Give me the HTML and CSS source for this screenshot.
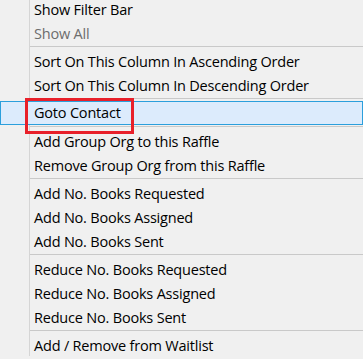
FILE: index.html
```html
<!DOCTYPE html>
<html lang="en">
<head>
    <meta charset="UTF-8">
    <title>Context Menu</title>
    <link rel="stylesheet" href="styles.css">
</head>
<body>
    <div class="menu">
        <div class="menu-item">Show Filter Bar</div>
        <div class="menu-item disabled">Show All</div>
        <div class="separator"></div>
        <div class="menu-item">Sort On This Column In Ascending Order</div>
        <div class="menu-item">Sort On This Column In Descending Order</div>
        <div class="separator"></div>
        <div class="menu-item active"><span class="callout">Goto Contact</span></div>
        <div class="separator"></div>
        <div class="menu-item">Add Group Org to this Raffle</div>
        <div class="menu-item">Remove Group Org from this Raffle</div>
        <div class="separator"></div>
        <div class="menu-item">Add No. Books Requested</div>
        <div class="menu-item">Add No. Books Assigned</div>
        <div class="menu-item">Add No. Books Sent</div>
        <div class="separator"></div>
        <div class="menu-item">Reduce No. Books Requested</div>
        <div class="menu-item">Reduce No. Books Assigned</div>
        <div class="menu-item">Reduce No. Books Sent</div>
        <div class="separator"></div>
        <div class="menu-item">Add / Remove from Waitlist</div>
    </div>
</body>
</html>
```

FILE: styles.css
```css
* {
    margin: 0;
    padding: 0;
    box-sizing: border-box;
}

html,
body {
    background: #f0f0f0;
}

body {
    font-family: 'Open Sans', 'Noto Sans', sans-serif;
    font-size: 14.5px;
    letter-spacing: -0.2px;
    color: #000;
    overflow: hidden;
}

.menu {
    margin-top: -2px;
    height: 358px;
    background: linear-gradient(to right, transparent 29px, #d5d5d5 29px, #d5d5d5 30px, transparent 30px);
}

.menu-item {
    position: relative;
    height: 24px;
    line-height: 24px;
    padding-left: 34px;
    white-space: nowrap;
}

.menu-item.disabled {
    color: #6d6d6d;
}

.menu-item.active {
    margin: -1px 0 1px;
    background: #dcebfc;
    border: 1px solid #2b9fdc;
    padding-left: 33px;
    line-height: 22px;
}

.separator {
    height: 4px;
    margin-left: 30px;
    border-top: 1px solid #c9c9c9;
}

.callout::after {
    content: '';
    position: absolute;
    left: 24px;
    top: -4px;
    width: 103px;
    height: 30px;
    border: 3px solid #e8202a;
}
```
